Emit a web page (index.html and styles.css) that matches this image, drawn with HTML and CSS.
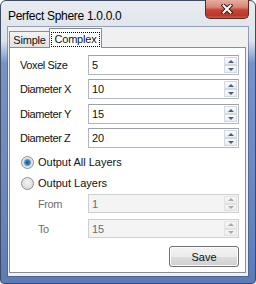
FILE: index.html
```html
<!DOCTYPE html>
<html lang="en">
<head>
    <meta charset="UTF-8">
    <title>Perfect Sphere 1.0.0.0</title>
    <link rel="stylesheet" href="styles.css">
</head>
<body>
    <div class="window">
        <div class="titlebar">
            <span class="title">Perfect Sphere 1.0.0.0</span>
            <div class="close">
                <svg width="12" height="10" viewBox="0 0 12 10">
                    <path d="M2.5 1.5 L9.5 8.5 M9.5 1.5 L2.5 8.5" stroke="#3a1512" stroke-width="4" stroke-linecap="square"/>
                    <path d="M2.5 1.5 L9.5 8.5 M9.5 1.5 L2.5 8.5" stroke="#fff" stroke-width="2" stroke-linecap="square"/>
                </svg>
            </div>
        </div>
        <div class="client">
            <div class="tabs">
                <div class="tab">Simple</div>
                <div class="tab active"><span class="focus">Complex</span></div>
            </div>
            <div class="panel">
                <div class="field">
                    <span class="label">Voxel Size</span>
                    <div class="spin"><span class="value">5</span><span class="arrows"><span class="btn up"></span><span class="btn down"></span></span></div>
                </div>
                <div class="field">
                    <span class="label">Diameter X</span>
                    <div class="spin"><span class="value">10</span><span class="arrows"><span class="btn up"></span><span class="btn down"></span></span></div>
                </div>
                <div class="field">
                    <span class="label">Diameter Y</span>
                    <div class="spin"><span class="value">15</span><span class="arrows"><span class="btn up"></span><span class="btn down"></span></span></div>
                </div>
                <div class="field">
                    <span class="label">Diameter Z</span>
                    <div class="spin"><span class="value">20</span><span class="arrows"><span class="btn up"></span><span class="btn down"></span></span></div>
                </div>

                <div class="radio checked first"><span class="dot"></span>Output All Layers</div>
                <div class="radio"><span class="dot"></span>Output Layers</div>

                <div class="field sub disabled from">
                    <span class="label">From</span>
                    <div class="spin"><span class="value">1</span><span class="arrows"><span class="btn up"></span><span class="btn down"></span></span></div>
                </div>
                <div class="field sub disabled">
                    <span class="label">To</span>
                    <div class="spin"><span class="value">15</span><span class="arrows"><span class="btn up"></span><span class="btn down"></span></span></div>
                </div>

                <div class="actions">
                    <div class="save">Save</div>
                </div>
            </div>
        </div>
    </div>
</body>
</html>
```

FILE: styles.css
```css
body {
    margin: 0;
    background: #fff;
    font-family: 'Liberation Sans', Arial, sans-serif;
    font-size: 11px;
    color: #111;
}
.window {
    width: 256px;
    height: 284px;
    box-sizing: border-box;
    border: 1px solid #3d4c63;
    border-radius: 6px 6px 4px 4px;
    padding: 0 7px;
    background: linear-gradient(180deg, #e8ecf1 0, #dde3ea 40px, #aebfd9 50px, #7593c7 62px, #6b89c0 180px, #5d7cb6 100%);
    display: flex;
    flex-direction: column;
}
.titlebar {
    height: 26px;
    display: flex;
    align-items: flex-start;
}
.title {
    font-size: 12px;
    letter-spacing: -0.3px;
    margin-top: 8px;
    color: #000;
}
.close {
    margin-left: auto;
    margin-right: -1px;
    margin-top: -1px;
    width: 44px;
    height: 19px;
    box-sizing: border-box;
    border: 1px solid #5b2820;
    border-top: none;
    border-radius: 0 0 5px 5px;
    background: linear-gradient(180deg, #e6ada1 0, #d98575 40%, #c54635 55%, #b9372a 85%, #cc5a45 100%);
    display: flex;
    align-items: center;
    justify-content: center;
}
.client {
    height: 246px;
    background: #f0f0f0;
    box-shadow: 0 0 0 1px rgba(50, 70, 110, 0.45);
    padding: 0 2px 3px 1px;
    display: flex;
    flex-direction: column;
}
.tabs {
    height: 20px;
    display: flex;
    align-items: flex-end;
}
.tab {
    height: 16px;
    width: 41px;
    box-sizing: border-box;
    border: 1px solid #898c95;
    border-bottom: none;
    background: linear-gradient(180deg, #f3f3f3, #e2e2e2);
    text-align: center;
    line-height: 16px;
    letter-spacing: -0.2px;
}
.tab.active {
    position: relative;
    z-index: 1;
    width: 53px;
    height: 20px;
    margin-left: -1px;
    margin-bottom: -1px;
    background: #fff;
    padding-top: 2px;
}
.focus {
    display: inline-block;
    border: 1px dotted #000;
    padding: 0 2px;
    line-height: 13px;
}
.panel {
    flex: 1;
    background: #fff;
    border: 1px solid #898c95;
    padding: 7px 6px 0 10px;
    display: flex;
    flex-direction: column;
}
.field {
    display: flex;
    align-items: center;
    height: 20px;
    margin-bottom: 4px;
}
.field:nth-child(3) {
    margin-top: 1px;
}
.label {
    width: 68px;
    flex: none;
    letter-spacing: -0.4px;
}
.spin {
    flex: 1;
    height: 100%;
    box-sizing: border-box;
    border: 1px solid #b3b7bd;
    border-top-color: #9ca1a8;
    background: #fff;
    display: flex;
    align-items: center;
    padding: 1px 1px 1px 3px;
}
.value {
    flex: 1;
}
.arrows {
    width: 13px;
    height: 100%;
    display: flex;
    flex-direction: column;
}
.btn {
    flex: 1;
    box-sizing: border-box;
    border: 1px solid #d3d9e0;
    background: linear-gradient(180deg, #fafbfc, #e9edf1);
    display: flex;
    align-items: center;
    justify-content: center;
}
.btn::after {
    content: '';
    border-left: 3px solid transparent;
    border-right: 3px solid transparent;
}
.up::after {
    border-bottom: 3px solid #4a5e80;
}
.down::after {
    border-top: 3px solid #4a5e80;
}
.radio {
    display: flex;
    align-items: center;
    height: 16px;
    margin-top: 5px;
    padding-left: 1px;
}
.radio.first {
    margin-top: 2px;
}
.dot {
    width: 13px;
    height: 13px;
    box-sizing: border-box;
    border-radius: 50%;
    border: 1px solid #8e8f8f;
    background: radial-gradient(circle at 50% 40%, #f4f4f4, #d4d4d4);
    margin-right: 4px;
}
.checked .dot {
    background: radial-gradient(circle at 50% 50%, #1c5e8e 0, #2a7dba 2px, #5aa0d3 3px, #dcdcdc 4px, #f0f0f0 6px);
}
.sub {
    height: 19px;
}
.sub .label {
    padding-left: 18px;
    width: 50px;
}
.from {
    margin-top: 3px;
    margin-bottom: 6px;
}
.disabled {
    color: #6d6d6d;
}
.disabled .spin {
    background: #f4f4f4;
    border-color: #cfcfcf;
}
.disabled .btn {
    border-color: #e2e2e2;
    background: linear-gradient(180deg, #f6f6f6, #ededed);
}
.disabled .up::after {
    border-bottom-color: #a9a9a9;
}
.disabled .down::after {
    border-top-color: #a9a9a9;
}
.actions {
    display: flex;
    justify-content: flex-end;
    margin-top: 4px;
}
.save {
    width: 70px;
    height: 21px;
    box-sizing: border-box;
    border: 1px solid #707070;
    border-radius: 3px;
    background: linear-gradient(180deg, #f3f3f3 0, #ebebeb 50%, #dddddd 51%, #cfcfcf 100%);
    box-shadow: inset 0 0 0 1px #fcfcfc;
    display: flex;
    align-items: center;
    justify-content: center;
}
```
